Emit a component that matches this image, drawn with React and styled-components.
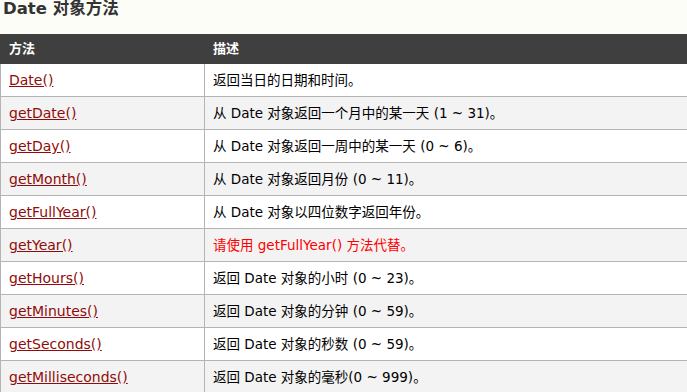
import React from 'react';
import styled, { createGlobalStyle } from 'styled-components';

const GlobalStyle = createGlobalStyle`
  body {
    margin: 0;
    background: #fdfdf8;
    font-family: Verdana, "DejaVu Sans", "Noto Sans CJK SC", sans-serif;
    overflow: hidden;
  }
`;

const Page = styled.div`
  width: 700px;
`;

const Title = styled.h2`
  margin: 0;
  padding: 0 0 0 3px;
  height: 34px;
  line-height: 17px;
  font-size: 16.5px;
  font-weight: bold;
  color: #333;
  font-family: "DejaVu Sans", "Noto Sans CJK SC", sans-serif;
`;

const Table = styled.table`
  border-collapse: collapse;
  width: 700px;
  font-size: 13.5px;
  font-family: "DejaVu Sans", "Noto Sans CJK SC", sans-serif;
`;

const HeadCell = styled.th`
  background: #3f3f3f;
  color: #fff;
  text-align: left;
  font-weight: bold;
  height: 28px;
  line-height: 18px;
  padding: 0 8px;
  font-size: 13px;
  border: 1px solid #3f3f3f;
  width: ${p => p.$width || 'auto'};
`;

const Row = styled.tr`
  background: ${p => (p.$odd ? '#f3f3f3' : '#fff')};
`;

const Cell = styled.td`
  height: 32px;
  line-height: 20px;
  padding: 0 8px;
  border: 1px solid #b4b4b4;
  color: ${p => (p.$warn ? '#f00' : '#000')};
  vertical-align: middle;
`;

const MethodLink = styled.a`
  color: #900b09;
  font-size: 14px;
  text-decoration: underline;
`;

const rows = [
  ['Date()', '返回当日的日期和时间。'],
  ['getDate()', '从 Date 对象返回一个月中的某一天 (1 ~ 31)。'],
  ['getDay()', '从 Date 对象返回一周中的某一天 (0 ~ 6)。'],
  ['getMonth()', '从 Date 对象返回月份 (0 ~ 11)。'],
  ['getFullYear()', '从 Date 对象以四位数字返回年份。'],
  ['getYear()', '请使用 getFullYear() 方法代替。', true],
  ['getHours()', '返回 Date 对象的小时 (0 ~ 23)。'],
  ['getMinutes()', '返回 Date 对象的分钟 (0 ~ 59)。'],
  ['getSeconds()', '返回 Date 对象的秒数 (0 ~ 59)。'],
  ['getMilliseconds()', '返回 Date 对象的毫秒(0 ~ 999)。'],
];

const App = () => (
  <Page>
    <GlobalStyle />
    <Title>Date 对象方法</Title>
    <Table>
      <thead>
        <tr>
          <HeadCell $width="187px">方法</HeadCell>
          <HeadCell>描述</HeadCell>
        </tr>
      </thead>
      <tbody>
        {rows.map(([name, desc, warn], i) => (
          <Row key={name} $odd={i % 2 === 1}>
            <Cell>
              <MethodLink href="#">{name}</MethodLink>
            </Cell>
            <Cell $warn={warn}>{desc}</Cell>
          </Row>
        ))}
      </tbody>
    </Table>
  </Page>
);

export default App;
